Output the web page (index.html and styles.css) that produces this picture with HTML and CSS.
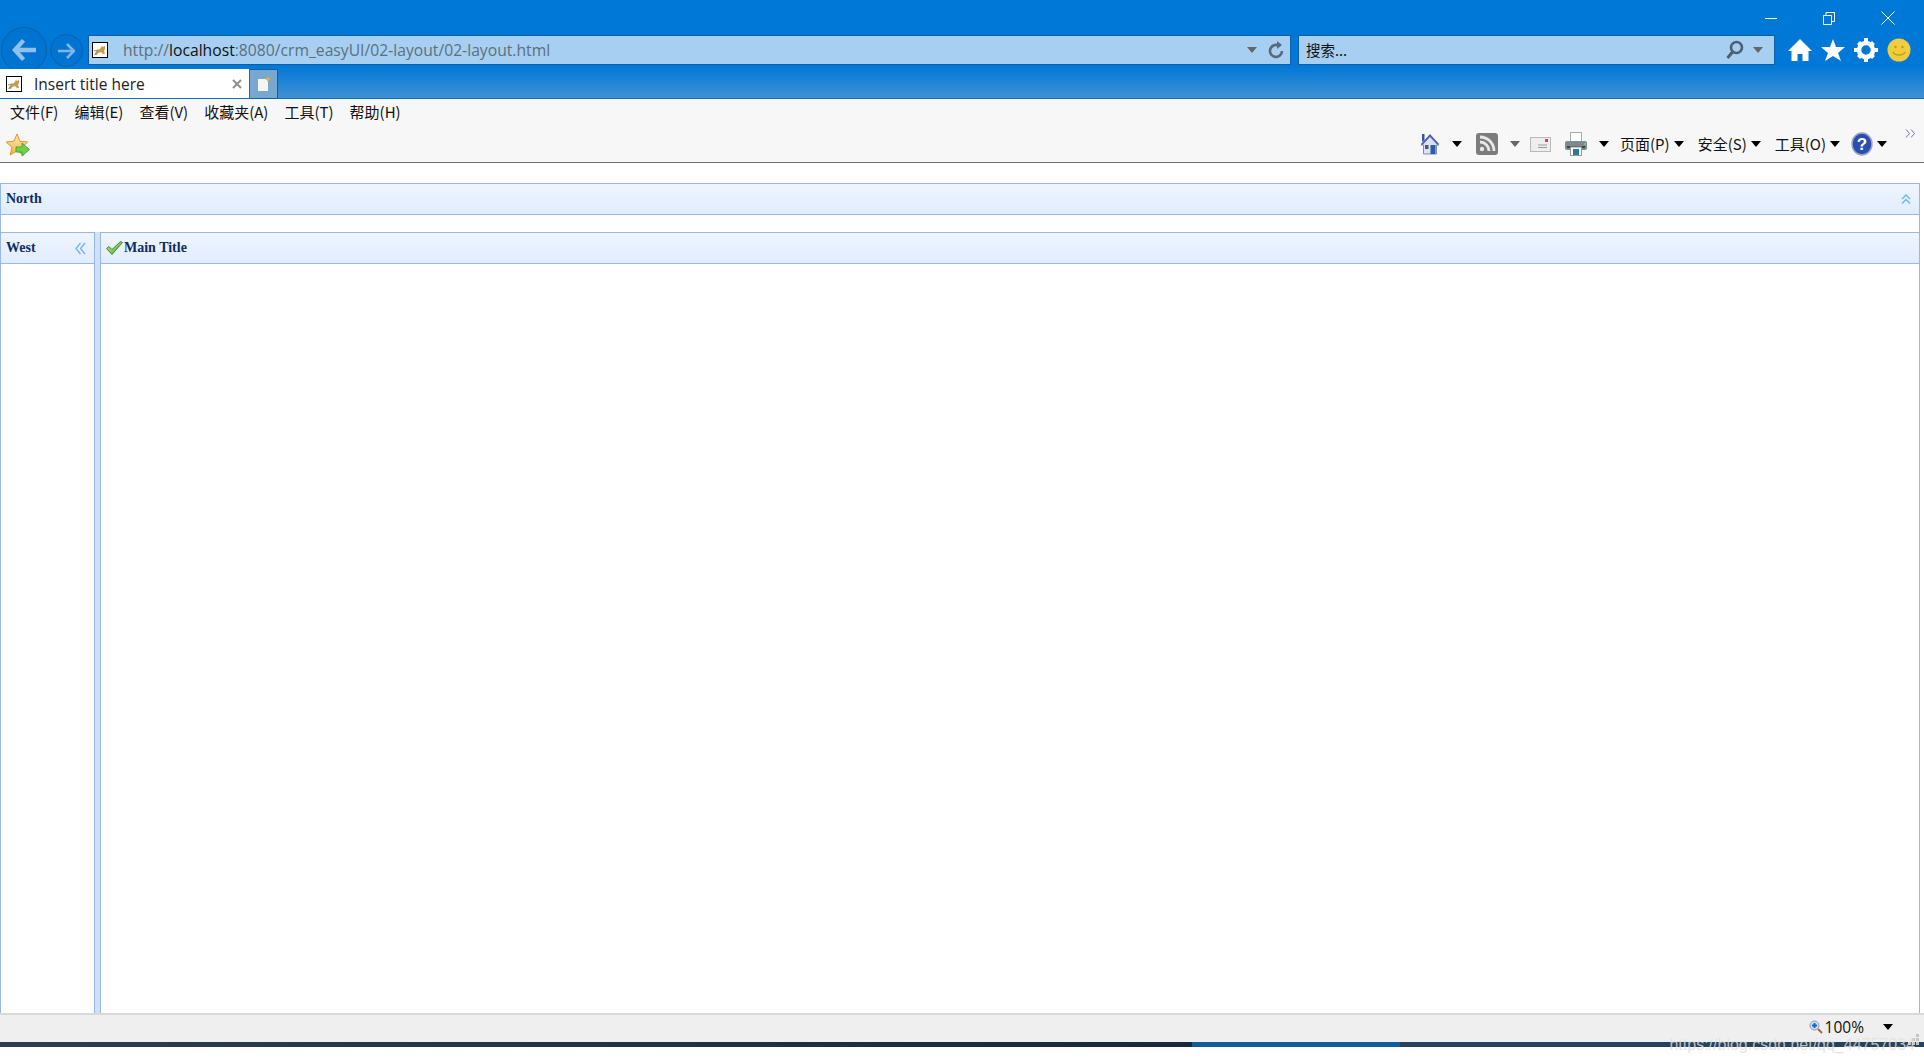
FILE: index.html
```html
<!DOCTYPE html>
<html lang="zh">
<head>
<meta charset="utf-8">
<title>Insert title here</title>
<link rel="stylesheet" href="styles.css">
</head>
<body>
<svg class="defs" width="0" height="0" aria-hidden="true">
  <symbol id="tomcat" viewBox="0 0 16 16">
    <rect x=".5" y=".5" width="15" height="15" fill="#fff" stroke="#000"/>
    <path d="M2 13l3-5 3-1 2-3 1 1 2-1 0 3-1 2 1 3h-2l-2-2-3 1-1 2z" fill="#c89b4a"/>
    <path d="M2 9l4-1M3 12l3-2" stroke="#8a8f95" fill="none"/>
  </symbol>
  <symbol id="caret" viewBox="0 0 10 6"><path d="M0 0h10L5 6z"/></symbol>
  <linearGradient id="stargrad" x1="0" y1="0" x2="0" y2="1"><stop offset="0" stop-color="#fdeeb0"/><stop offset="1" stop-color="#f3b33c"/></linearGradient>
  <linearGradient id="tickgrad" x1="0" y1="0" x2="1" y2="1"><stop offset="0" stop-color="#b7ec7a"/><stop offset="1" stop-color="#4fae3a"/></linearGradient>
</svg>

<header class="chrome">
  <div class="caption">
    <button class="win"><svg width="12" height="12" viewBox="0 0 12 12"><path d="M0 6.500h12" stroke="#fff"/></svg></button>
    <button class="win"><svg width="12" height="13" viewBox="0 0 12 13" fill="none" stroke="#fff"><path d="M.5 3.500h8v9h-8zM3 3.500V.5h8.500v9H8.500"/></svg></button>
    <button class="win"><svg width="14" height="14" viewBox="0 0 14 14" fill="none" stroke="#fff"><path d="M.5.500l13 13M13.500.500l-13 13"/></svg></button>
  </div>
  <div class="navrow">
    <div class="navbtns">
      <span class="circle big"><svg width="25" height="24" viewBox="0 0 26 24" fill="none" stroke="#8fc1ec" stroke-width="4.500"><path d="M12 2L3 12l9 10M3 12h22"/></svg></span>
      <span class="circle small"><svg width="17" height="16" viewBox="0 0 17 16" fill="none" stroke="#7fb6e6" stroke-width="2.600"><path d="M9 1l7 7-7 7M16 8H0"/></svg></span>
    </div>
    <div class="field address">
      <svg class="fav" width="16" height="16"><use href="#tomcat"/></svg>
      <span class="url">http://<b>localhost</b>:8080/crm_easyUI/02-layout/02-layout.html</span>
      <svg class="caret grey" width="10" height="6"><use href="#caret"/></svg>
      <svg class="refresh" width="16" height="20" viewBox="0 0 16 20" fill="none" stroke="#59697a" stroke-width="2.600"><path d="M10.500 5.500A6 6 0 1 0 14 11"/><path d="M9 1l0 8 5-4z" fill="#59697a" stroke="none"/></svg>
    </div>
    <div class="field search">
      <span class="query">搜索...</span>
      <svg class="lens" width="18" height="20" viewBox="0 0 18 20" fill="none" stroke="#4d5f70" stroke-width="2.600"><circle cx="10.500" cy="7.500" r="5.500"/><path d="M6.500 12L1.500 18" stroke-width="3"/></svg>
      <svg class="caret grey" width="10" height="6"><use href="#caret"/></svg>
    </div>
    <div class="tools">
      <svg width="24" height="24" viewBox="0 0 24 24" fill="#fff"><path d="M12 1L0 13h3.500v10h6v-7h5v7h6V13H24z"/></svg>
      <svg width="24" height="24" viewBox="0 0 24 24" fill="#fff"><path d="M12 1l3 8h9l-7 6 3 8-8-5-8 5 3-8-7-6h9z"/></svg>
      <svg width="24" height="24" viewBox="0 0 24 24"><circle cx="12" cy="12" r="7" fill="none" stroke="#fff" stroke-width="4.500"/><path d="M10 0h4v4h-4zM10 20h4v4h-4zM0 10h4v4H0zM20 10h4v4h-4zM3 6l3-3 3 3-3 3zM15 6l3-3 3 3-3 3zM3 18l3-3 3 3-3 3zM15 18l3-3 3 3-3 3z" fill="#fff"/></svg>
      <svg width="24" height="24" viewBox="0 0 24 24"><circle cx="12" cy="12" r="11.500" fill="#f0cd3c"/><circle cx="8.500" cy="9" r="1.200" fill="#b89a2a"/><circle cx="15.500" cy="9" r="1.200" fill="#b89a2a"/><path d="M6 14c2 4 10 4 12 0" fill="none" stroke="#b89a2a" stroke-width="1.500"/></svg>
    </div>
  </div>
  <div class="tabrow">
    <div class="tab">
      <svg class="fav" width="16" height="16"><use href="#tomcat"/></svg>
      <span class="tabtitle">Insert title here</span>
      <svg class="tabclose" width="10" height="10" viewBox="0 0 10 10" stroke="#8e8e8e" stroke-width="2"><path d="M1 1l8 8M9 1l-8 8"/></svg>
    </div>
    <div class="newtab"><svg width="14" height="16" viewBox="0 0 14 16"><path d="M1 3h8l2 2v10H1z" fill="#f4f4f4"/><path d="M11 0l1 2 2 1-2 1-1 2-1-2-2-1 2-1z" fill="#f0b030"/></svg></div>
  </div>
</header>

<nav class="menubar">
  <span>文件(F)</span><span>编辑(E)</span><span>查看(V)</span><span>收藏夹(A)</span><span>工具(T)</span><span>帮助(H)</span>
</nav>

<div class="cmdbar">
  <svg class="favstar" width="24" height="24" viewBox="0 0 24 24"><path d="M11 1l3 7.300 7.800.7-6 5.200 1.800 7.800-6.600-4-6.800 4 1.800-7.800-6-5.200 7.800-.7z" fill="url(#stargrad)" stroke="#d99a2b"/><path d="M10 14h6v-4l7.500 6.500-7.500 6.500v-4h-6z" fill="#6fd14e" stroke="#3f9a2f" stroke-width=".8"/></svg>
  <div class="cmds">
    <svg class="ci home" width="20" height="22" viewBox="0 0 20 22"><path d="M10 2L1 12h2.500v9h13v-9H19z" fill="#d9e2ee" stroke="#7f8fb0"/><path d="M10 1L1 11l1.500 1L10 4l7.500 8 1.500-1z" fill="#4a63b8"/><path d="M2 1h2.500v6L2 9z" fill="#3a50a8"/><rect x="10.500" y="12" width="5" height="9" fill="#2a5fa8"/><rect x="5" y="12" width="3.500" height="4" fill="#557"/></svg>
    <svg class="caret" width="10" height="6"><use href="#caret"/></svg>
    <svg class="ci rss" width="22" height="22" viewBox="0 0 22 22"><rect width="22" height="22" rx="3" fill="#7c7c7c"/><circle cx="6" cy="16" r="2.200" fill="#e8e8e8"/><path d="M4 9a9 9 0 0 1 9 9M4 4a14 14 0 0 1 14 14" fill="none" stroke="#e8e8e8" stroke-width="2.800"/></svg>
    <svg class="caret grey" width="10" height="6"><use href="#caret"/></svg>
    <svg class="ci mail" width="21" height="15" viewBox="0 0 21 15"><rect x=".5" y=".5" width="20" height="14" fill="#eee" stroke="#b9b9b9"/><rect x="15" y="2" width="3" height="3" fill="#e04040"/><path d="M8 8h9M8 10.500h9" stroke="#9a9a9a"/></svg>
    <svg class="ci print" width="24" height="24" viewBox="0 0 24 24"><rect x="6.500" y=".5" width="11" height="9" fill="#fff" stroke="#aaa"/><rect x="1" y="9" width="22" height="9" rx="2" fill="#7d8a90"/><rect x="3" y="14" width="18" height="2" fill="#3b4449"/><rect x="20" y="11" width="2" height="2" fill="#6fd14e"/><rect x="6.500" y="15" width="11" height="8.500" fill="#fff" stroke="#999"/><rect x="9" y="17" width="6" height="6" fill="#2d7f8f"/></svg>
    <svg class="caret" width="10" height="6"><use href="#caret"/></svg>
    <span class="cmd">页面(P)</span><svg class="caret" width="10" height="6"><use href="#caret"/></svg>
    <span class="cmd">安全(S)</span><svg class="caret" width="10" height="6"><use href="#caret"/></svg>
    <span class="cmd">工具(O)</span><svg class="caret" width="10" height="6"><use href="#caret"/></svg>
    <svg class="ci help" width="22" height="24" viewBox="0 0 22 24"><ellipse cx="11" cy="12" rx="10" ry="11" fill="#2a4eb0" stroke="#9aa4c4" stroke-width="1.500"/><text x="11" y="18" text-anchor="middle" class="q">?</text></svg>
    <svg class="caret" width="10" height="6"><use href="#caret"/></svg>
    <svg class="chev" width="11" height="9" viewBox="0 0 11 9" fill="none" stroke="#7076a8"><path d="M1 .5l3.500 4L1 8.500M6 .5l3.500 4L6 8.500"/></svg>
  </div>
</div>

<main class="page">
  <section class="panel north">
    <div class="phead">
      <span class="ptitle">North</span>
      <svg class="tool" width="10" height="10" viewBox="0 0 10 10" fill="none" stroke="#6db3f2" stroke-width="1.400"><path d="M1 5l4-4 4 4M1 9.500l4-4 4 4"/></svg>
    </div>
    <div class="nbody"></div>
  </section>
  <div class="lower">
    <section class="panel west">
      <div class="phead">
        <span class="ptitle">West</span>
        <svg class="tool" width="11" height="13" viewBox="0 0 11 13" fill="none" stroke="#6db3f2" stroke-width="1.300"><path d="M5.500 1L1 6.500 5.500 12M10 1L5.500 6.500 10 12"/></svg>
      </div>
      <div class="pbody"></div>
    </section>
    <div class="split"></div>
    <section class="panel center">
      <div class="phead">
        <svg class="check" width="17" height="14" viewBox="0 0 17 14"><path d="M.5 7.500L3 5.500l3 3L14.500.5 16.500 1.500 6 13.500z" fill="url(#tickgrad)" stroke="#2f7f2f" stroke-width=".9"/></svg>
        <span class="ptitle">Main Title</span>
      </div>
      <div class="pbody"></div>
    </section>
  </div>
</main>

<footer class="status">
  <svg width="14" height="14" viewBox="0 0 14 14"><circle cx="5.500" cy="5.500" r="4.500" fill="#cfe0f5" stroke="#8a9ab0"/><path d="M3 5.500h5M5.500 3v5" stroke="#1c62c4" stroke-width="2"/><path d="M9 9l4 4" stroke="#a5682a" stroke-width="2"/></svg>
  <span class="zoomval">100%</span>
  <svg class="caret" width="10" height="6"><use href="#caret"/></svg>
</footer>
<div class="taskbar"><span class="active"></span></div>
<svg class="grip" width="11" height="11" viewBox="0 0 11 11" fill="#c4c4c4"><path d="M8 0h3v3H8zM4 4h3v3H4zM8 4h3v3H8zM0 8h3v3H0zM4 8h3v3H4zM8 8h3v3H8z"/></svg>
<div class="mark">https://blog.csdn.net/qq_44757034</div>
</body>
</html>
```

FILE: styles.css
```css
* { box-sizing: border-box; }
html, body { margin: 0; height: 100%; }
body {
  width: 1924px;
  height: 1062px;
  overflow: hidden;
  position: relative;
  background: #fff;
  font-family: "Noto Sans CJK SC", "Noto Sans", sans-serif;
  display: flex;
  flex-direction: column;
}
.defs { position: absolute; }
svg { display: block; flex: none; }
.caret { fill: #000; }
.caret.grey { fill: #666; }

.chrome {
  height: 99px;
  flex: none;
  background: linear-gradient(#0078d7 0, #0078d7 66px, #4091d2 98px);
  border-bottom: 1px solid #0a6fc2;
}
.caption { height: 35px; display: flex; justify-content: flex-end; align-items: center; padding: 1px 7px 0 0; }
.win { width: 58.500px; height: 34px; padding: 0; border: 0; background: none; display: flex; align-items: center; justify-content: center; }

.navrow { height: 34px; display: flex; align-items: flex-start; }
.navbtns { width: 88px; height: 30px; position: relative; flex: none; }
.circle {
  position: absolute;
  border-radius: 50%;
  border: 1px solid #0d5ea8;
  background: #0074d0;
  display: flex; align-items: center; justify-content: center;
}
.circle.big { left: 1px; top: -8px; width: 46px; height: 46px; }
.circle.small { left: 50px; top: -1px; width: 33px; height: 33px; }
.field {
  height: 30px;
  background: #a6cff1;
  border: 1px solid #0f5fa6;
  display: flex;
  align-items: center;
  flex: none;
}
.address { width: 1203px; margin-right: 7px; padding: 0 6px 0 3px; }
.search { width: 477px; padding: 0 11px 0 7px; }
.url {
  flex: 1;
  margin-left: 15px;
  font-family: "Open Sans", "Noto Sans", sans-serif;
  font-size: 15.700px;
  color: #5e6e7d;
  white-space: nowrap;
}
.url b { font-weight: 400; color: #111; }
.address .caret { margin-right: 11px; }
.query { flex: 1; font-size: 14.500px; color: #111; padding-bottom: 2px; }
.lens { margin-right: 9px; }
.tools { display: flex; gap: 9px; margin-left: 13px; margin-top: 3px; }

.tabrow { height: 29px; display: flex; position: relative; }
.tab {
  width: 250px; height: 30px;
  background: #fff;
  border: 1px solid #0a6fc2;
  border-left: 0; border-top: 0;
  display: flex; align-items: center;
  padding: 0 7px 0 6px;
}
.tabtitle { flex: 1; margin-left: 12px; font-family: "Open Sans", sans-serif; font-size: 15.500px; color: #222; }
.newtab {
  width: 28px; height: 30px;
  background: #78a7d2;
  border: 1px solid #0f5fa6; border-left: 0;
  display: flex; align-items: center; justify-content: center;
}

.menubar {
  height: 27px; flex: none;
  background: #f7f7f7;
  display: flex; align-items: center;
  gap: 16px;
  padding: 0 0 3px 10px;
  font-size: 15px; color: #111;
}
.cmdbar {
  height: 37px; flex: none;
  background: #f7f7f7;
  border-bottom: 1px solid #707070;
  display: flex; align-items: center;
  padding-left: 6px;
}
.favstar { margin-top: 2px; }
.cmds { margin-left: auto; display: flex; align-items: center; font-size: 15px; color: #111; padding-right: 8px; }
.cmd { margin-left: 14px; margin-right: 4px; padding-bottom: 2px; }
.print + .caret + .cmd { margin-left: 11px; }
.home + .caret { margin-left: 12px; }
.ci.rss { margin-left: 14px; }
.rss + .caret { margin-left: 12px; }
.ci.mail { margin-left: 10px; }
.ci.print { margin-left: 13px; }
.print + .caret { margin-left: 11px; }
.ci.help { margin-left: 11px; }
.help + .caret { margin-left: 4px; }
.chev { margin-left: 18px; margin-top: -22px; }
.q { font: 700 17px "Liberation Sans", sans-serif; fill: #fff; }

.page {
  flex: 1;
  min-height: 0;
  padding: 20px 4px 0 0;
  display: flex;
  flex-direction: column;
}
.panel { display: flex; flex-direction: column; }
.phead {
  height: 32px; flex: none;
  border: 1px solid #95b8e7;
  background: linear-gradient(#eff5ff, #e0ecff);
  display: flex; align-items: center;
  padding: 0 5px;
}
.north .phead { padding-right: 8px; }
.west .phead { padding-right: 8px; }
.ptitle { font: 700 14px "Liberation Serif", serif; color: #0e2d5f; }
.tool { margin-left: auto; }
.nbody { height: 17px; border: 1px solid #95b8e7; border-width: 0 1px; }
.lower { flex: 1; min-height: 0; display: flex; }
.west { width: 95px; flex: none; }
.center { flex: 1; }
.pbody { flex: 1; border: 1px solid #95b8e7; border-width: 0 1px; }
.split { width: 5px; flex: none; background: #cfe0f8; }
.check { margin-right: 1px; }

.status {
  height: 29px; flex: none;
  background: #efefef;
  border-top: 2px solid #d9d9d9;
  display: flex; align-items: center; justify-content: flex-end;
  padding: 0 31px 3px 0;
  font-family: "Open Sans", sans-serif;
  font-size: 15.500px; color: #111;
}
.zoomval { margin-left: 2px; margin-right: 19px; }
.taskbar { height: 5px; flex: none; background: linear-gradient(90deg, #2a3f4f 0, #17293a 1192px, #27435c 1400px); margin-bottom: 15px; padding-left: 1192px; }
.active { display: block; width: 208px; height: 5px; background: #135d9a; }
.grip { position: absolute; right: 5px; bottom: 17px; }
.mark {
  position: absolute;
  right: 9px; bottom: 8px;
  font: 16px "Liberation Sans", sans-serif;
  color: rgba(225, 225, 225, .8);
  white-space: nowrap;
}
```
